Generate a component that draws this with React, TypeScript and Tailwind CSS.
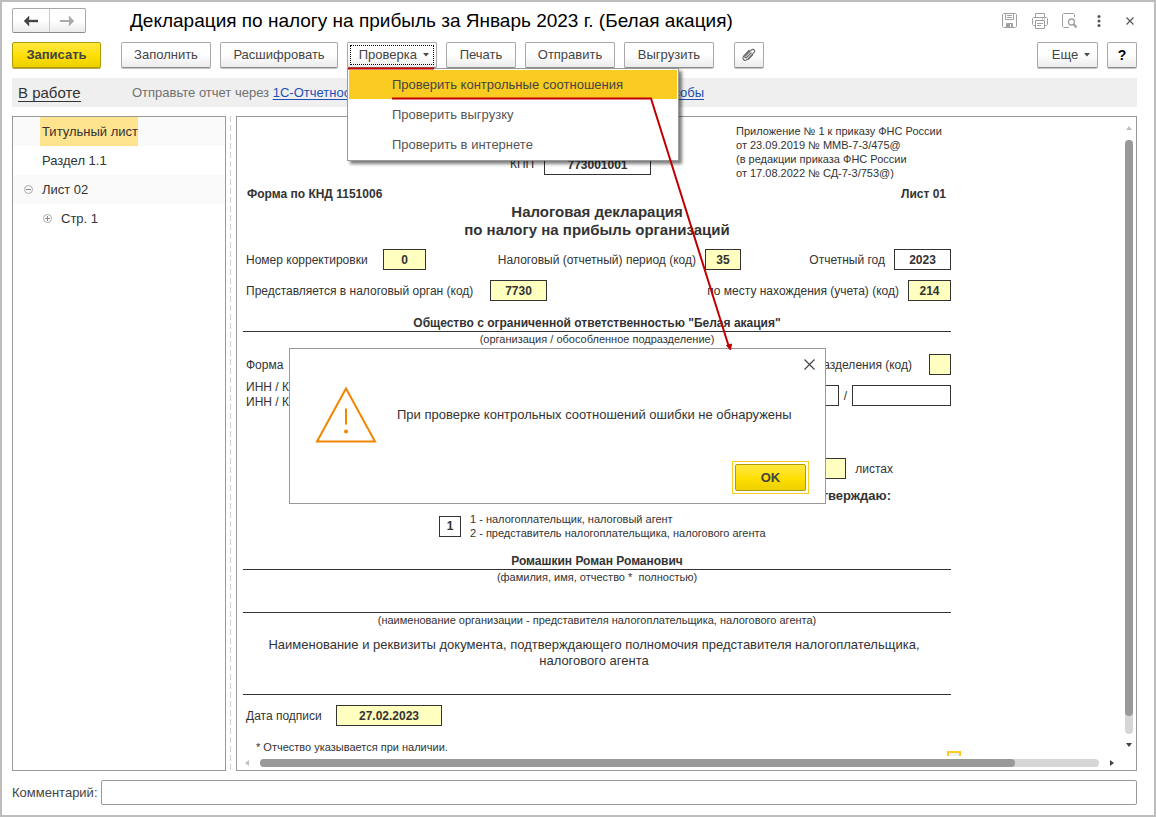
import React, { useState } from 'react'
import clsx from 'clsx'

interface ToolButtonProps {
  children: React.ReactNode
  className?: string
  label?: string
}

const ToolButton: React.FC<ToolButtonProps> = ({ children, className, label }) => (
  <button
    type="button"
    aria-label={label}
    className={clsx(
      'flex h-[26px] shrink-0 items-center justify-center rounded-[2px] border border-[#a9a9a9] border-b-[#8c8c8c] bg-linear-to-b from-white from-50% to-[#ebebeb] text-[#444] shadow-[0_1px_0_#c4c4c4]',
      className
    )}
  >
    {children}
  </button>
)

const Caret = () => (
  <svg width="6" height="4" viewBox="0 0 6 4" className="shrink-0">
    <path d="M0 0h6L3 3.5z" fill="#4a4a4a" />
  </svg>
)

interface FieldProps {
  id: string
  label?: string
  value?: string
  className?: string
  plain?: boolean
}

const Field: React.FC<FieldProps> = ({ id, label, value = '', className, plain }) => (
  <input
    id={id}
    aria-label={label}
    defaultValue={value}
    className={clsx(
      'h-[21px] shrink-0 border border-[#333] p-0 text-center text-xs font-bold outline-none',
      plain ? 'bg-white' : 'bg-[#ffffc0]',
      className
    )}
  />
)

const TitleBar = () => (
  <div className="flex h-[25px] items-center">
    <div className="flex h-[25px] w-[74px] shrink-0 rounded-[2px] border border-[#a9a9a9] border-b-[#8c8c8c] bg-linear-to-b from-white from-50% to-[#ebebeb]">
      <button type="button" aria-label="Назад" className="flex flex-1 items-center justify-center border-r border-[#c8c8c8]">
        <svg width="14" height="10" viewBox="0 0 14 10" fill="none">
          <path d="M14 5H3" stroke="#444" strokeWidth="2.4" />
          <path d="M0 5 5 0v3.2L3.4 5 5 6.8V10z" fill="#444" stroke="#444" strokeWidth=".4" />
        </svg>
      </button>
      <button type="button" aria-label="Вперед" className="flex flex-1 items-center justify-center">
        <svg width="14" height="10" viewBox="0 0 14 10" fill="none">
          <path d="M0 5h11" stroke="#aaa" strokeWidth="2" />
          <path d="M14 5 9 0v3.2L10.6 5 9 6.8V10z" fill="#aaa" stroke="#aaa" strokeWidth=".4" />
        </svg>
      </button>
    </div>
    <h1 className="ml-[44px] flex-1 text-[19px] leading-6 whitespace-nowrap text-black">
      Декларация по налогу на прибыль за Январь 2023 г. (Белая акация)
    </h1>
    <div className="flex items-center text-[#a0a0a0]">
      <button type="button" aria-label="Сохранить">
        <svg width="15" height="15" viewBox="0 0 15 15" fill="none" stroke="currentColor">
          <path d="M1.5.5h12l1 1v12l-1 1h-12l-1-1v-12z" />
          <path d="M3.5.5v6h8v-6M5 2.5h5M5 4.5h5M4.500 14.500v-4h6v4" />
          <path d="M5 11h3v3H5zM9 11h1v3H9z" fill="currentColor" stroke="none" />
        </svg>
      </button>
      <button type="button" aria-label="Печать" className="ml-[15px]">
        <svg width="16" height="16" viewBox="0 0 16 16" fill="none" stroke="currentColor">
          <path d="M3.500 4.500v-4h9v4M3.500 12.500h-2l-1-1v-6l1-1h13l1 1v6l-1 1h-2" />
          <path d="M3.500 7.500h9v8h-9zM5 10.500h6M5 12.500h4M10 6h1M12 6h1" />
        </svg>
      </button>
      <button type="button" aria-label="Просмотр" className="ml-[14px]">
        <svg width="16" height="16" viewBox="0 0 16 16" fill="none" stroke="currentColor">
          <path d="M12.500 4V1.500l-1-1h-10l-1 1v12l1 1H7" />
          <circle cx="9.500" cy="9" r="3" strokeWidth="1.300" />
          <path d="m11.500 11 3 3.500" strokeWidth="2" />
        </svg>
      </button>
      <button type="button" aria-label="Меню окна" className="ml-[19px]">
        <svg width="4" height="12" viewBox="0 0 4 12" fill="#555">
          <circle cx="2" cy="1.600" r="1.500" />
          <circle cx="2" cy="6" r="1.500" />
          <circle cx="2" cy="10.400" r="1.500" />
        </svg>
      </button>
      <button type="button" aria-label="Закрыть" className="mr-[3px] ml-[25px]">
        <svg width="8" height="8" viewBox="0 0 8 8" stroke="#555" strokeWidth="1.200">
          <path d="m.5.5 7 7m0-7-7 7" />
        </svg>
      </button>
    </div>
  </div>
)

const checks = ['Проверить контрольные соотношения', 'Проверить выгрузку', 'Проверить в интернете']

const Toolbar = () => (
  <div className="mt-[9px] flex h-[26px] gap-[9px]">
    <button
      type="button"
      className="mr-[11px] h-[26px] w-[89px] shrink-0 rounded-[2px] border border-[#b09c00] bg-linear-to-b from-[#ffe83b] via-[#ffe000] to-[#ecd000] font-bold text-[#444] shadow-[0_1px_0_#b8a84a]"
    >
      Записать
    </button>
    <ToolButton className="w-[90px]">Заполнить</ToolButton>
    <ToolButton className="w-[118px]">Расшифровать</ToolButton>
    <div className="relative">
      <ToolButton className="w-[90px] p-[2px] from-[#dcdcdc]">
        <span className="flex h-full w-full items-center justify-end gap-[6px] border border-dotted border-black pr-1">
          Проверка
          <Caret />
        </span>
      </ToolButton>
      <ul className="absolute top-[26px] left-0 z-10 flex w-[332px] flex-col gap-px border border-[#999] bg-white p-px shadow-[3px_3px_3px_rgba(0,0,0,0.5)]">
        {checks.map((item, index) => (
          <li key={item}>
            <button
              type="button"
              className={clsx('h-[29px] w-full pl-[43px] text-left', index === 0 ? 'bg-[#facb20] text-[#444]' : 'text-[#555]')}
            >
              {item}
            </button>
          </li>
        ))}
      </ul>
    </div>
    <ToolButton className="w-[70px]">Печать</ToolButton>
    <ToolButton className="w-[90px]">Отправить</ToolButton>
    <ToolButton className="w-[90px]">Выгрузить</ToolButton>
    <ToolButton className="ml-[11px] w-[30px]" label="Прикрепить файл">
      <svg width="14" height="14" viewBox="0 0 14 14" fill="none" stroke="#666" strokeWidth="1.100">
        <path d="m9.500 4.500-5 5c-1 1-2.300-.2-1.300-1.300l6-6c2-2 4.600.4 2.700 2.500l-6.200 6.500c-3 3-6.400-.4-3.700-3.500L7.500 2" />
        <path d="M11 6.500 6 11.700" />
      </svg>
    </ToolButton>
    <div className="ml-auto flex gap-[9px]">
      <ToolButton className="w-[61px] gap-[6px] pl-[7px]">
        Еще
        <Caret />
      </ToolButton>
      <ToolButton className="w-[30px] text-sm font-bold text-black" label="Справка">
        ?
      </ToolButton>
    </div>
  </div>
)

const StatusBar = () => (
  <div className="mt-[10px] flex h-[29px] shrink-0 items-center bg-[#efefef] pl-[6px]">
    <a href="#status" className="w-[114px] text-[15px] leading-5 text-[#333]">
      <span className="inline-block border-b border-[#333] leading-4">В работе</span>
    </a>
    <p className="flex w-[572px] justify-between text-[#707070]">
      <span>
        Отправьте отчет через{' '}
        <a href="#reporting" className="text-[#1d4fb5] underline underline-offset-2">
          1С-Отчетность
        </a>
      </span>
      <a href="#ways" className="text-[#1d4fb5] underline underline-offset-2">
        способы
      </a>
    </p>
  </div>
)

interface TreeNode {
  title: string
  indent: string
  sign?: 'plus' | 'minus'
}

const nodes: TreeNode[] = [
  { title: 'Титульный лист', indent: 'pl-[11px]' },
  { title: 'Раздел 1.1', indent: 'pl-[11px]' },
  { title: 'Лист 02', indent: 'pl-[11px]', sign: 'minus' },
  { title: 'Стр. 1', indent: 'pl-[30px]', sign: 'plus' },
]

const SectionTree = () => {
  const [active, setActive] = useState(0)

  return (
    <nav className="w-[214px] shrink-0 border border-[#999] text-[#333]">
      <ul>
        {nodes.map((node, index) => (
          <li key={node.title} className={clsx('flex h-[29px] items-center', node.indent, index % 2 === 0 && 'bg-[#fafafa]')}>
            <span className="flex w-4 shrink-0">
              {node.sign && (
                <svg width="9" height="9" viewBox="0 0 9 9" fill="none" stroke="#888">
                  <circle cx="4.500" cy="4.500" r="4" stroke="#aaa" />
                  <path d={node.sign === 'plus' ? 'M2 4.500h5M4.500 2v5' : 'M2 4.500h5'} />
                </svg>
              )}
            </span>
            <button
              type="button"
              onClick={() => setActive(index)}
              className={clsx('h-full pl-[2px] text-left', index === active && 'bg-[#ffe48f]')}
            >
              {node.title}
            </button>
          </li>
        ))}
      </ul>
    </nav>
  )
}

const Sheet = () => (
  <div className="w-[708px] shrink-0 text-xs leading-4 text-[#333]">
    <div className="flex pt-[7px] pl-[267px]">
      <label htmlFor="kpp" className="mt-[30px] w-[34px] leading-[21px]">
        КПП
      </label>
      <Field id="kpp" value="773001001" className="mt-[30px] w-[107px]" plain />
      <p className="ml-auto w-[215px] text-[11px] leading-[14px]">
        Приложение № 1 к приказу ФНС России
        <br />
        от 23.09.2019 № ММВ-7-3/475@
        <br />
        (в редакции приказа ФНС России
        <br />
        от 17.08.2022 № СД-7-3/753@)
      </p>
    </div>
    <div className="mt-[6px] flex justify-between pr-[5px] pl-1 font-bold">
      <span>Форма по КНД 1151006</span>
      <span>Лист 01</span>
    </div>
    <h2 className="mt-px text-center text-[15px] leading-[18px] font-bold">
      Налоговая декларация
      <br />
      по налогу на прибыль организаций
    </h2>
    <div className="mt-[10px] flex items-center pl-[3px]">
      <label htmlFor="correction" className="w-[137px]">
        Номер корректировки
      </label>
      <Field id="correction" value="0" className="w-[43px]" />
      <label htmlFor="period" className="ml-auto pr-[9px]">
        Налоговый (отчетный) период (код)
      </label>
      <Field id="period" value="35" className="w-[36px]" />
      <label htmlFor="year" className="w-[153px] pr-[9px] text-right">
        Отчетный год
      </label>
      <Field id="year" value="2023" className="w-[57px]" plain />
    </div>
    <div className="mt-[10px] flex items-center pl-[3px]">
      <label htmlFor="authority" className="w-[244px]">
        Представляется в налоговый орган (код)
      </label>
      <Field id="authority" value="7730" className="w-[57px]" />
      <label htmlFor="place" className="ml-auto pr-[9px]">
        по месту нахождения (учета) (код)
      </label>
      <Field id="place" value="214" className="w-[43px]" />
    </div>
    <p className="mt-[15px] border-b border-[#333] text-center leading-[15px] font-bold">
      Общество с ограниченной ответственностью "Белая акация"
    </p>
    <p className="text-center text-[11px] leading-[14px]">(организация / обособленное подразделение)</p>
    <div className="mt-[8px] flex items-center pl-[3px]">
      <span>Форма</span>
      <label htmlFor="reorganization" className="ml-auto pr-[17px]">
        подразделения (код)
      </label>
      <Field id="reorganization" className="w-[22px]" />
    </div>
    <div className="mt-[5px] flex pl-[3px]">
      <p className="leading-[15px]">
        ИНН / КПП
        <br />
        ИНН / КПП
      </p>
      <div className="mt-[5px] ml-auto flex h-[21px] items-center">
        <Field id="inn2" label="ИНН" className="w-[99px]" plain />
        <span className="w-[13px] text-center">/</span>
        <Field id="kpp2" label="КПП" className="w-[99px]" plain />
      </div>
    </div>
    <div className="mt-[48px] flex items-center justify-end pr-[58px]">
      <Field id="pages" className="w-[50px]" />
      <label htmlFor="pages" className="pl-[9px]">
        листах
      </label>
    </div>
    <p className="mt-[8px] pr-[60px] text-right text-[13px] leading-[18px] font-bold">подтверждаю:</p>
    <div className="mt-[7px] flex items-center gap-[9px] pl-[196px]">
      <Field id="signer" label="Признак подписанта" value="1" className="w-[22px]" plain />
      <p className="text-[11px] leading-[14px]">
        1 - налогоплательщик, налоговый агент
        <br />2 - представитель налогоплательщика, налогового агента
      </p>
    </div>
    <p className="mt-[14px] border-b border-[#333] text-center leading-[15px] font-bold">Ромашкин Роман Романович</p>
    <p className="text-center text-[11px] leading-[14px]">(фамилия, имя, отчество *&nbsp; полностью)</p>
    <div className="h-[29px] border-b border-[#333]" />
    <p className="text-center text-[11px] leading-[14px]">
      (наименование организации - представителя налогоплательщика, налогового агента)
    </p>
    <p className="mt-[10px] pr-[6px] text-center text-[13px] leading-4">
      Наименование и реквизиты документа, подтверждающего полномочия представителя налогоплательщика,
      <br />
      налогового агента
    </p>
    <div className="h-[26px] border-b border-[#333]" />
    <div className="mt-[10px] flex items-center pl-[3px]">
      <label htmlFor="sign-date" className="w-[90px]">
        Дата подписи
      </label>
      <Field id="sign-date" value="27.02.2023" className="w-[106px]" />
    </div>
    <div className="mt-[14px] flex h-4 w-[718px] items-end justify-between pl-[13px]">
      <p className="self-start text-[11px] leading-[14px]">* Отчество указывается при наличии.</p>
      <span className="h-[5px] w-[14px] border-2 border-b-0 border-[#facb20] bg-[#f0f0f0]" />
    </div>
  </div>
)

const Document = () => (
  <main className="flex min-w-0 flex-1 flex-col border border-[#999]">
    <div className="flex flex-1">
      <div className="min-w-0 flex-1 overflow-hidden pl-[6px]">
        <Sheet />
      </div>
      <div className="flex w-[14px] flex-col items-center pt-[9px] pb-[9px]">
        <svg width="6" height="4" viewBox="0 0 6 4">
          <path d="M0 4h6L3 0z" fill="#c0c0c0" />
        </svg>
        <div className="mt-[10px] mb-[9px] w-2 flex-1 rounded-full bg-[#d6d6d6]">
          <div className="h-[97%] w-2 rounded-full bg-[#999]" />
        </div>
        <svg width="6" height="4" viewBox="0 0 6 4">
          <path d="M0 0h6L3 4z" fill="#444" />
        </svg>
      </div>
    </div>
    <div className="flex h-[14px] items-center pr-[22px] pl-[8px]">
      <svg width="4" height="6" viewBox="0 0 4 6">
        <path d="M4 0v6L0 3z" fill="#c0c0c0" />
      </svg>
      <div className="mr-[11px] ml-[11px] h-2 flex-1 rounded-full bg-[#d6d6d6]">
        <div className="h-2 w-[90%] rounded-full bg-[#999]" />
      </div>
      <svg width="4" height="6" viewBox="0 0 4 6">
        <path d="M0 0v6l4-3z" fill="#444" />
      </svg>
    </div>
  </main>
)

const ResultDialog = () => (
  <div
    role="dialog"
    aria-label="Результат проверки"
    className="absolute top-[346px] left-[287px] z-20 flex h-[156px] w-[537px] flex-col border border-[#999] bg-white text-[#333]"
  >
    <button type="button" aria-label="Закрыть" className="mt-[10px] mr-[10px] self-end">
      <svg width="11" height="11" viewBox="0 0 11 11" stroke="#444" strokeWidth="1.200">
        <path d="m.5.5 10 10m0-10-10 10" />
      </svg>
    </button>
    <div className="mt-[17px] flex gap-5 pl-[25px]">
      <svg width="62" height="57" viewBox="0 0 62 57" fill="none" stroke="#f28500" strokeWidth="2">
        <path d="M31 1.500 2 54.500h58z" />
        <path d="M31 21.500v16" />
        <circle cx="31" cy="44.500" r="2" fill="#f28500" stroke="none" />
      </svg>
      <p className="pt-[18px] leading-5">При проверке контрольных соотношений ошибки не обнаружены</p>
    </div>
    <div className="mt-auto mr-4 mb-[9px] self-end border border-[#facb20] p-[2px]">
      <button
        type="button"
        className="h-[27px] w-[71px] rounded-[2px] border border-[#b09c00] bg-linear-to-b from-[#ffe83b] via-[#ffe000] to-[#ecd000] font-bold text-[#444]"
      >
        OK
      </button>
    </div>
  </div>
)

// Красная стрелка от пункта меню к окну результата
const Callout = () => (
  <svg
    width="390"
    height="290"
    viewBox="0 0 390 290"
    fill="none"
    stroke="#c00000"
    strokeWidth="2"
    className="pointer-events-none absolute top-[64px] left-[345px] z-30"
  >
    <path d="M1 2.500h86" />
    <path d="M45 32.500h259l77.500 247" />
    <path d="m379.500 279.500 5-1.500-1 6z" fill="#c00000" strokeWidth="1" />
  </svg>
)

const App = () => (
  <div className="relative flex min-h-screen flex-col border-2 border-[#bdbdbd] bg-white pt-[6px] pr-[17px] pb-[10px] pl-[10px] font-['Liberation_Sans',Arial,sans-serif] text-[13px] leading-4">
    <TitleBar />
    <Toolbar />
    <StatusBar />
    <div className="mt-[9px] flex flex-1">
      <SectionTree />
      <div className="flex w-[10px] shrink-0 pl-1">
        <div className="w-px bg-[repeating-linear-gradient(to_bottom,#d0d0d0_0_6px,transparent_6px_9px)]" />
      </div>
      <Document />
    </div>
    <div className="mt-[9px] flex h-[25px] items-center text-[#444]">
      <label htmlFor="comment" className="w-[89px]">
        Комментарий:
      </label>
      <input id="comment" className="h-[25px] min-w-0 flex-1 rounded-[2px] border border-[#999] px-2 outline-none" />
    </div>
    <ResultDialog />
    <Callout />
  </div>
)

export default App
